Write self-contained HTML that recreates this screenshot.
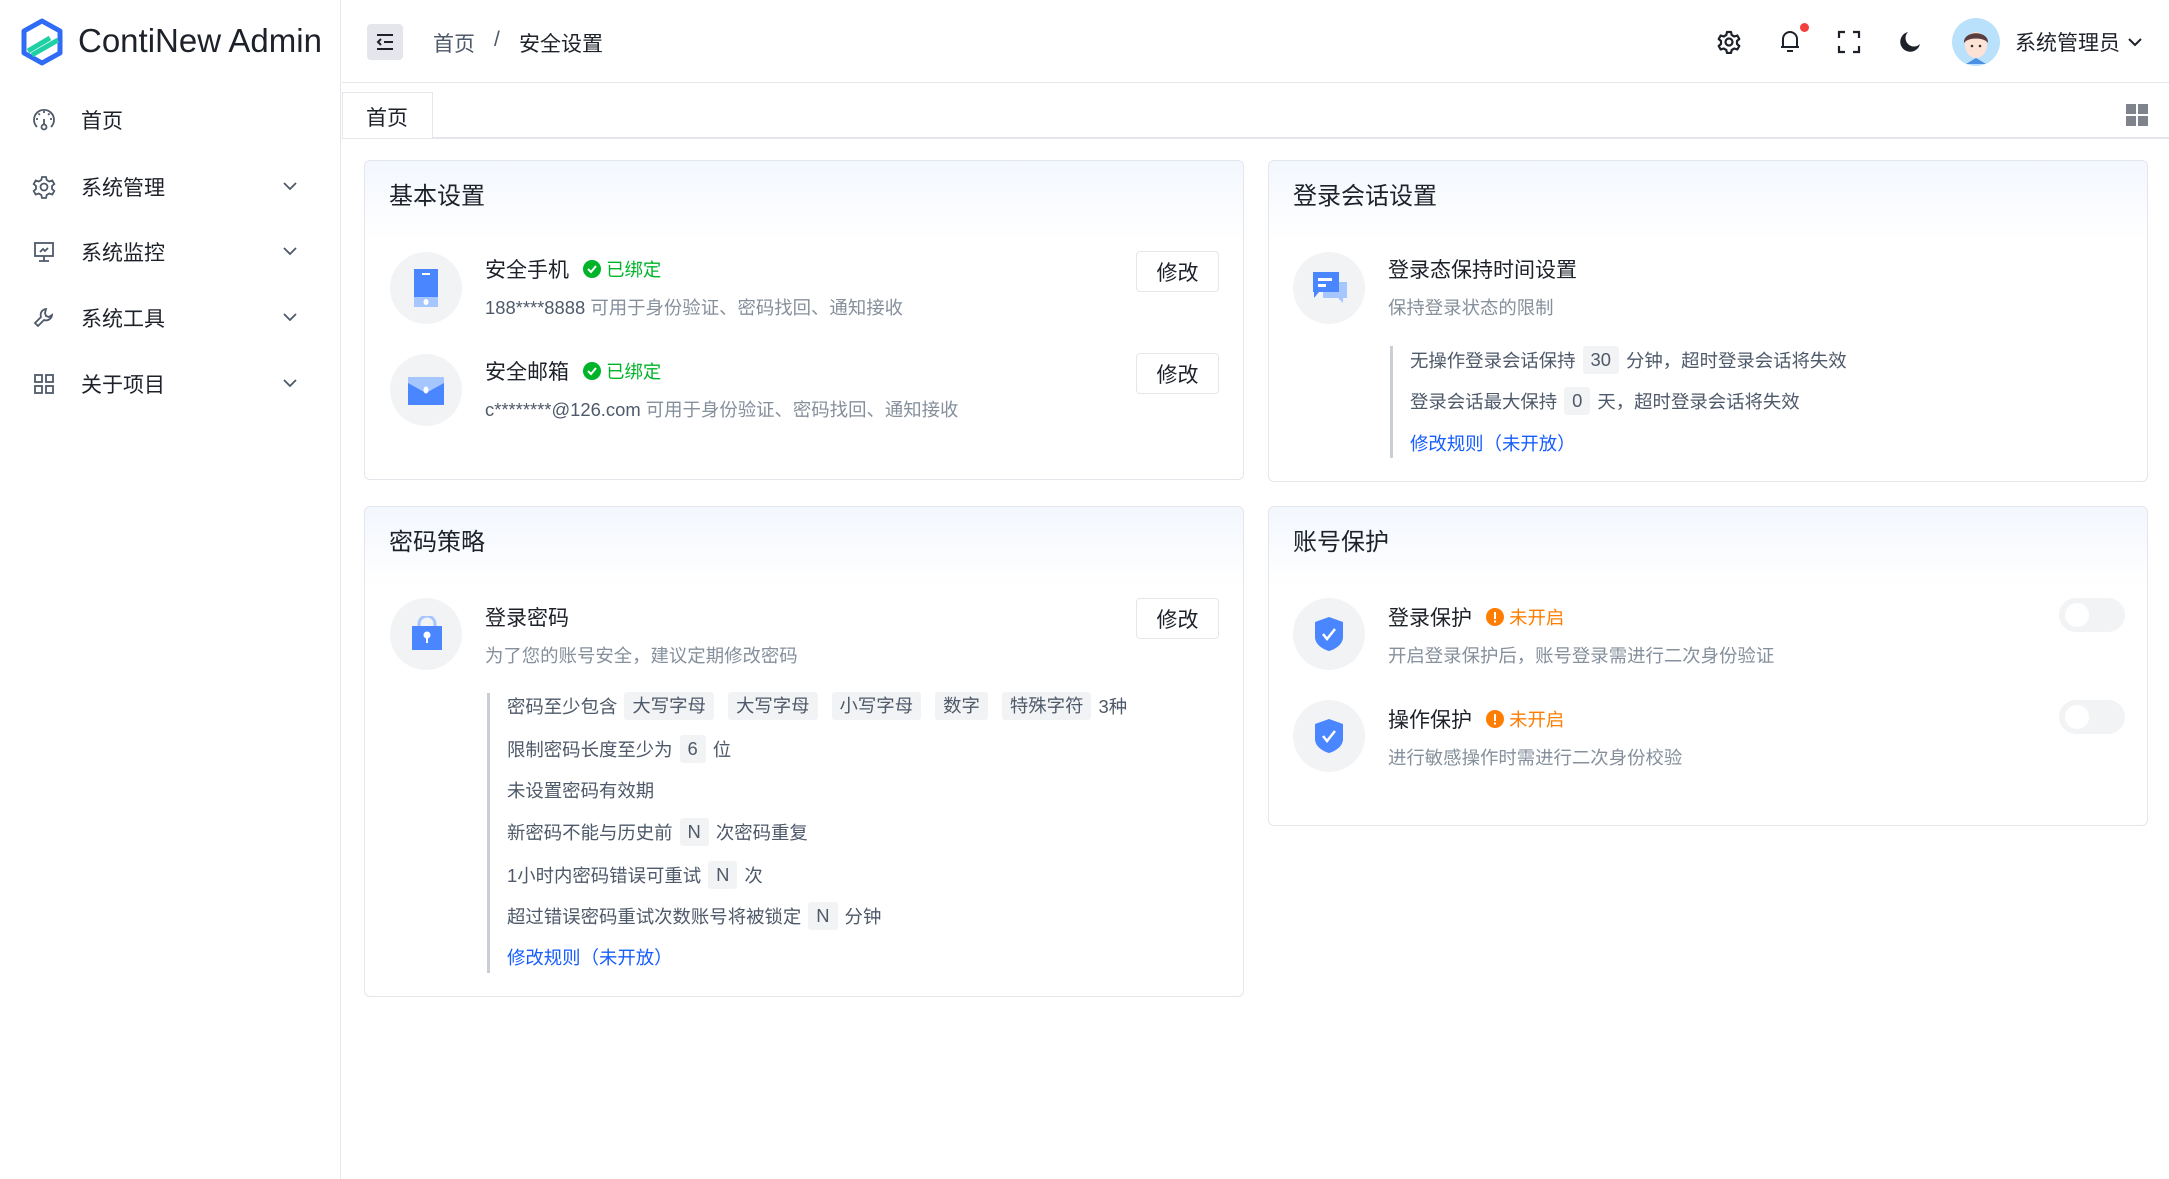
<!DOCTYPE html>
<html><head><meta charset="utf-8"><style>
*{margin:0;padding:0;box-sizing:border-box}
body{width:2169px;height:1179px;overflow:hidden;background:#fff;font-family:"Liberation Sans","Noto Sans CJK SC",sans-serif;color:#1d2129;position:relative}
.a{position:absolute}
.side{left:0;top:0;width:341px;height:1179px;background:#fff;border-right:1px solid #e5e6eb}
.mi{position:absolute;left:0;width:340px;height:50px;font-size:21px;color:#1d2129;display:flex;align-items:center}
.mi .ic{position:absolute;left:32px;width:24px;height:24px}
.mi .t{position:absolute;left:81px}
.mi .ch{position:absolute;left:282px;top:18px}
.card{position:absolute;border:1px solid #e5e6eb;border-radius:6px;background:linear-gradient(180deg,#f3f7fe 0,#fff 80px)}
.ct{position:absolute;left:24px;top:15px;font-size:24px;color:#1d2129}
.circ{position:absolute;width:72px;height:72px;border-radius:50%;background:#f2f3f5}
.it{position:absolute;font-size:21px;color:#1d2129;white-space:nowrap;display:flex;align-items:center}
.ds{position:absolute;font-size:18.4px;color:#86909c;white-space:nowrap}
.btn{position:absolute;width:83px;height:41px;border:1px solid #e5e6eb;border-radius:4px;background:#fff;font-size:21px;display:flex;align-items:center;justify-content:center}
.ok{color:#00b42a;font-size:18.4px;margin-left:14px;display:flex;align-items:center}
.warn{color:#ff7d00;font-size:18.4px;margin-left:14px;display:flex;align-items:center}
.ln{position:absolute;font-size:18.4px;color:#4e5969;white-space:nowrap;display:flex;align-items:center}
.tag{background:#f2f3f5;border-radius:3px;padding:0 8px;height:28px;line-height:28px;margin:0 7px;color:#4e5969}
.lk{color:#165dff}
.bar{position:absolute;width:3px;background:#c9cdd4}
.sw{position:absolute;width:66px;height:34px;border-radius:17px;background:#f2f3f5}
.sw:after{content:"";position:absolute;left:6px;top:5px;width:24px;height:24px;border-radius:50%;background:#fff}
</style></head><body>
<div class="a side">
  <svg class="a" style="left:20px;top:18px" width="44" height="48" viewBox="0 0 44 48"><path d="M22 3 L40 13 V35 L22 45 L4 35 V13 Z" fill="none" stroke="#2f6bf5" stroke-width="5" stroke-linejoin="round"/><path d="M8 33 L30 20 M12 37 L38 22" stroke="#1fd0a5" stroke-width="5"/></svg>
  <div class="a" style="left:78px;top:22px;font-size:33px;color:#1d2129">ContiNew Admin</div>
  <div class="mi" style="top:95px"><svg class="ic" viewBox="0 0 24 24" fill="none" stroke="#4e5969" stroke-width="1.8"><path d="M5 19A10 10 0 1 1 19 19"/><circle cx="12" cy="19" r="2.5"/><path d="M12 16.5V11M12 3v2M4 11h2M18 11h2M6.5 5.5l1.4 1.4M17.5 5.5l-1.4 1.4"/></svg><span class="t">首页</span></div>
  <div class="mi" style="top:162px"><svg class="ic" viewBox="0 0 24 24" fill="none" stroke="#4e5969" stroke-width="1.8"><path d="M10 2h4l.7 3 2.6 1.5 3-1 2 3.5-2.3 2v3l2.3 2-2 3.5-3-1-2.6 1.5-.7 3h-4l-.7-3-2.6-1.5-3 1-2-3.5 2.3-2v-3l-2.3-2 2-3.5 3 1L9.3 5z"/><circle cx="12" cy="12" r="3.5"/></svg><span class="t">系统管理</span><svg class="ch" width="16" height="12" viewBox="0 0 16 12"><path d="M2 3l6 6 6-6" fill="none" stroke="#4e5969" stroke-width="1.8"/></svg></div>
  <div class="mi" style="top:227px"><svg class="ic" viewBox="0 0 24 24" fill="none" stroke="#4e5969" stroke-width="1.8"><rect x="3" y="3" width="18" height="13"/><path d="M12 16v5M7 21h10M8 12l3-3 2 2 3-3"/></svg><span class="t">系统监控</span><svg class="ch" width="16" height="12" viewBox="0 0 16 12"><path d="M2 3l6 6 6-6" fill="none" stroke="#4e5969" stroke-width="1.8"/></svg></div>
  <div class="mi" style="top:293px"><svg class="ic" viewBox="0 0 24 24" fill="none" stroke="#4e5969" stroke-width="1.8"><path d="M14 3a6 6 0 0 0-5 8L3 17l3 3 6-6a6 6 0 0 0 8-5l-3 2-3-1-1-3z"/></svg><span class="t">系统工具</span><svg class="ch" width="16" height="12" viewBox="0 0 16 12"><path d="M2 3l6 6 6-6" fill="none" stroke="#4e5969" stroke-width="1.8"/></svg></div>
  <div class="mi" style="top:359px"><svg class="ic" viewBox="0 0 24 24" fill="none" stroke="#4e5969" stroke-width="1.8"><rect x="3" y="3" width="7" height="7"/><rect x="14" y="3" width="7" height="7"/><rect x="3" y="14" width="7" height="7"/><rect x="14" y="14" width="7" height="7"/></svg><span class="t">关于项目</span><svg class="ch" width="16" height="12" viewBox="0 0 16 12"><path d="M2 3l6 6 6-6" fill="none" stroke="#4e5969" stroke-width="1.8"/></svg></div>
</div>
<!-- header -->
<div class="a" style="left:342px;top:0;width:1827px;height:83px;border-bottom:1px solid #e5e6eb;background:#fff"></div>
<div class="a" style="left:367px;top:24px;width:36px;height:36px;border-radius:4px;background:#e5e6eb"><svg width="36" height="36" viewBox="0 0 36 36" fill="none" stroke="#1d2129" stroke-width="2"><path d="M10 11h16M17 18h9M10 25h16M14 15l-3 3 3 3"/></svg></div>
<div class="a" style="left:433px;top:28px;font-size:21px;color:#4e5969">首页</div>
<div class="a" style="left:494px;top:28px;font-size:21px;color:#4e5969">/</div>
<div class="a" style="left:519px;top:28px;font-size:21px;color:#1d2129">安全设置</div>
<svg class="a" style="left:1717px;top:30px" width="24" height="24" viewBox="0 0 24 24" fill="none" stroke="#1d2129" stroke-width="2.2"><path d="M10 2h4l.7 3 2.6 1.5 3-1 2 3.5-2.3 2v3l2.3 2-2 3.5-3-1-2.6 1.5-.7 3h-4l-.7-3-2.6-1.5-3 1-2-3.5 2.3-2v-3l-2.3-2 2-3.5 3 1L9.3 5z" stroke-linejoin="round"/><circle cx="12" cy="12" r="3.5"/></svg>
<svg class="a" style="left:1778px;top:28px" width="24" height="26" viewBox="0 0 24 26" fill="none" stroke="#1d2129" stroke-width="2"><path d="M5 19V11a7 7 0 0 1 14 0v8M3 19h18M9 23h6"/></svg>
<div class="a" style="left:1800px;top:23px;width:9px;height:9px;border-radius:50%;background:#f53f3f"></div>
<svg class="a" style="left:1837px;top:30px" width="24" height="24" viewBox="0 0 24 24" fill="none" stroke="#1d2129" stroke-width="2.2"><path d="M2 8V2h6M16 2h6v6M22 16v6h-6M8 22H2v-6"/></svg>
<svg class="a" style="left:1898px;top:30px" width="24" height="24" viewBox="0 0 24 24"><path d="M10 2a10 10 0 1 0 12 12A8 8 0 0 1 10 2z" fill="#1d2129"/></svg>
<div class="a" style="left:1952px;top:18px;width:48px;height:48px;border-radius:50%;background:#b9e1fb;overflow:hidden"><svg width="48" height="48" viewBox="0 0 48 48"><ellipse cx="24" cy="27" rx="11" ry="13" fill="#fde3d6"/><path d="M12 25c-1-13 25-13 24 0-4-6-20-6-24 0z" fill="#5a3d3f"/><path d="M14 46l10-6 10 6z" fill="#4a90e2"/><circle cx="20" cy="28" r="1.3" fill="#333"/><circle cx="28" cy="28" r="1.3" fill="#333"/></svg></div>
<div class="a" style="left:2015px;top:27px;font-size:21px;color:#1d2129">系统管理员</div>
<svg class="a" style="left:2127px;top:36px" width="16" height="12" viewBox="0 0 16 12"><path d="M2 3l6 6 6-6" fill="none" stroke="#1d2129" stroke-width="2"/></svg>
<!-- tabs -->
<div class="a" style="left:342px;top:137px;width:1827px;height:2px;background:#e5e6eb"></div>
<div class="a" style="left:342px;top:92px;width:91px;height:46px;border:1px solid #e5e6eb;border-bottom:none;background:#fff;font-size:21px;padding:9px 0 0 23px;color:#1d2129">首页</div>
<svg class="a" style="left:2126px;top:104px" width="22" height="22" viewBox="0 0 22 22" fill="#7f838c"><rect width="10" height="10"/><rect x="12" width="10" height="10"/><rect y="12" width="10" height="10"/><rect x="12" y="12" width="10" height="10"/></svg>

<!-- card 1 -->
<div class="card" style="left:364px;top:160px;width:880px;height:320px">
  <div class="ct">基本设置</div>
  <div class="circ" style="left:25px;top:91px"><svg style="margin:17px 0 0 23px" width="26" height="38" viewBox="0 0 26 38"><rect x="1" y="0" width="24" height="28" fill="#4a86ff"/><rect x="1" y="28" width="24" height="10" fill="#a6c6ff"/><rect x="9" y="4" width="8" height="2" fill="#fff"/><ellipse cx="13" cy="33" rx="2.5" ry="3" fill="#fff"/></svg></div>
  <div class="it" style="left:120px;top:93px">安全手机<span class="ok"><svg width="18" height="18" viewBox="0 0 18 18"><circle cx="9" cy="9" r="9" fill="#00b42a"/><path d="M5 9l3 3 5-6" fill="none" stroke="#fff" stroke-width="2"/></svg>&nbsp;已绑定</span></div>
  <div class="ds" style="left:120px;top:133px"><span style="color:#4e5969">188****8888</span> 可用于身份验证、密码找回、通知接收</div>
  <div class="btn" style="left:771px;top:90px">修改</div>
  <div class="circ" style="left:25px;top:193px"><svg style="margin:23px 0 0 18px" width="36" height="28" viewBox="0 0 36 28"><rect width="36" height="28" fill="#4a86ff"/><path d="M0 0h36v6L18 16 0 6z" fill="#a6c6ff"/><ellipse cx="18" cy="13" rx="2.5" ry="3.5" fill="#fff"/></svg></div>
  <div class="it" style="left:120px;top:195px">安全邮箱<span class="ok"><svg width="18" height="18" viewBox="0 0 18 18"><circle cx="9" cy="9" r="9" fill="#00b42a"/><path d="M5 9l3 3 5-6" fill="none" stroke="#fff" stroke-width="2"/></svg>&nbsp;已绑定</span></div>
  <div class="ds" style="left:120px;top:235px"><span style="color:#4e5969">c********@126.com</span> 可用于身份验证、密码找回、通知接收</div>
  <div class="btn" style="left:771px;top:192px">修改</div>
</div>

<!-- card 2 -->
<div class="card" style="left:1268px;top:160px;width:880px;height:322px">
  <div class="ct">登录会话设置</div>
  <div class="circ" style="left:24px;top:91px"><svg style="margin:20px 0 0 20px" width="34" height="32" viewBox="0 0 34 32"><path d="M10 10h24v16h-4v5l-5-5H10z" fill="#a6c6ff"/><path d="M0 0h26v20H6l-5 6v-6H0z" fill="#4a86ff"/><rect x="5" y="6" width="14" height="3" fill="#fff"/><rect x="5" y="12" width="8" height="3" fill="#fff"/></svg></div>
  <div class="it" style="left:119px;top:93px">登录态保持时间设置</div>
  <div class="ds" style="left:119px;top:133px">保持登录状态的限制</div>
  <div class="bar" style="left:121px;top:185px;height:112px"></div>
  <div class="ln" style="left:141px;top:185px">无操作登录会话保持<span class="tag">30</span>分钟，超时登录会话将失效</div>
  <div class="ln" style="left:141px;top:226px">登录会话最大保持<span class="tag">0</span>天，超时登录会话将失效</div>
  <div class="ln lk" style="left:141px;top:269px">修改规则（未开放）</div>
</div>

<!-- card 3 -->
<div class="card" style="left:364px;top:506px;width:880px;height:491px">
  <div class="ct">密码策略</div>
  <div class="circ" style="left:25px;top:91px"><svg style="margin:18px 0 0 22px" width="30" height="34" viewBox="0 0 30 34"><path d="M7 12V8a8 8 0 0 1 16 0v4" fill="none" stroke="#a6c6ff" stroke-width="3"/><rect y="10" width="30" height="24" fill="#4a86ff"/><circle cx="15" cy="19" r="3.5" fill="#fff"/><rect x="14" y="21" width="2" height="6" fill="#fff"/></svg></div>
  <div class="it" style="left:120px;top:95px">登录密码</div>
  <div class="ds" style="left:120px;top:135px">为了您的账号安全，建议定期修改密码</div>
  <div class="btn" style="left:771px;top:91px">修改</div>
  <div class="bar" style="left:122px;top:186px;height:280px"></div>
  <div class="ln" style="left:142px;top:185px">密码至少包含<span class="tag">大写字母</span><span class="tag">大写字母</span><span class="tag">小写字母</span><span class="tag">数字</span><span class="tag">特殊字符</span>3种</div>
  <div class="ln" style="left:142px;top:228px">限制密码长度至少为<span class="tag">6</span>位</div>
  <div class="ln" style="left:142px;top:270px">未设置密码有效期</div>
  <div class="ln" style="left:142px;top:311px">新密码不能与历史前<span class="tag">N</span>次密码重复</div>
  <div class="ln" style="left:142px;top:354px">1小时内密码错误可重试<span class="tag">N</span>次</div>
  <div class="ln" style="left:142px;top:395px">超过错误密码重试次数账号将被锁定<span class="tag">N</span>分钟</div>
  <div class="ln lk" style="left:142px;top:437px">修改规则（未开放）</div>
</div>

<!-- card 4 -->
<div class="card" style="left:1268px;top:506px;width:880px;height:320px">
  <div class="ct">账号保护</div>
  <div class="circ" style="left:24px;top:91px"><svg style="margin:19px 0 0 22px" width="28" height="34" viewBox="0 0 28 34"><path d="M14 0L28 5v15c0 7-7 12-14 14C7 32 0 27 0 20V5z" fill="#4a86ff"/><path d="M8 17l4 5 8-10" fill="none" stroke="#fff" stroke-width="2.5"/></svg></div>
  <div class="it" style="left:119px;top:95px">登录保护<span class="warn"><svg width="18" height="18" viewBox="0 0 18 18"><circle cx="9" cy="9" r="9" fill="#ff7d00"/><rect x="8" y="4" width="2" height="7" fill="#fff"/><rect x="8" y="12.5" width="2" height="2" fill="#fff"/></svg>&nbsp;未开启</span></div>
  <div class="ds" style="left:119px;top:135px">开启登录保护后，账号登录需进行二次身份验证</div>
  <div class="sw" style="left:790px;top:91px"></div>
  <div class="circ" style="left:24px;top:193px"><svg style="margin:19px 0 0 22px" width="28" height="34" viewBox="0 0 28 34"><path d="M14 0L28 5v15c0 7-7 12-14 14C7 32 0 27 0 20V5z" fill="#4a86ff"/><path d="M8 17l4 5 8-10" fill="none" stroke="#fff" stroke-width="2.5"/></svg></div>
  <div class="it" style="left:119px;top:197px">操作保护<span class="warn"><svg width="18" height="18" viewBox="0 0 18 18"><circle cx="9" cy="9" r="9" fill="#ff7d00"/><rect x="8" y="4" width="2" height="7" fill="#fff"/><rect x="8" y="12.5" width="2" height="2" fill="#fff"/></svg>&nbsp;未开启</span></div>
  <div class="ds" style="left:119px;top:237px">进行敏感操作时需进行二次身份校验</div>
  <div class="sw" style="left:790px;top:193px"></div>
</div>
</body></html>
